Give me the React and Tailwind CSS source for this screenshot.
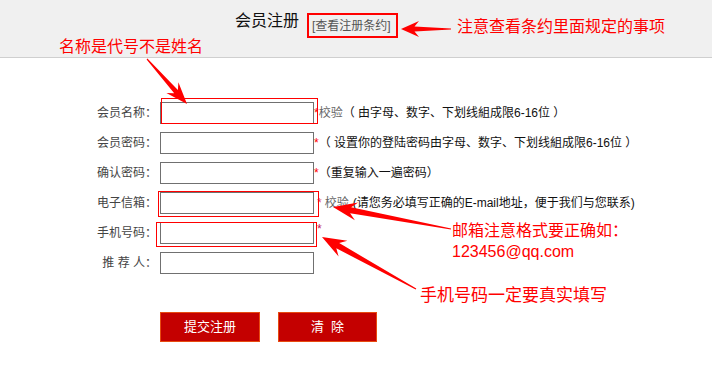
import React from "react";

const font = { fontFamily: '"Liberation Sans", "Noto Sans CJK SC", sans-serif' };

// polygon for a screenshot-style annotation arrow: thin tail, widening shaft, triangular head
const arrowPoints = (tx, ty, hx, hy, headLen, headW, shaftW) => {
  const dx = hx - tx;
  const dy = hy - ty;
  const len = Math.hypot(dx, dy);
  const ux = dx / len;
  const uy = dy / len;
  const px = -uy;
  const py = ux;
  const bx = hx - ux * headLen;
  const by = hy - uy * headLen;
  const nx = hx - ux * headLen * 0.75;
  const ny = hy - uy * headLen * 0.75;
  const pts = [
    [tx + px * 0.6, ty + py * 0.6],
    [nx + px * shaftW, ny + py * shaftW],
    [bx + px * headW, by + py * headW],
    [hx, hy],
    [bx - px * headW, by - py * headW],
    [nx - px * shaftW, ny - py * shaftW],
    [tx - px * 0.6, ty - py * 0.6],
  ];
  return pts.map((p) => p.map((v) => v.toFixed(1)).join(",")).join(" ");
};

const arrows = [
  { t: [147, 59], h: [187, 104], hl: 22, hw: 8, sw: 2.5 },
  { t: [451, 229], h: [333, 207], hl: 24, hw: 9, sw: 3 },
  { t: [416, 289], h: [322, 237], hl: 24, hw: 9, sw: 3 },
];

const rows = [
  {
    label: "会员名称：",
    hint: (
      <>
        <span className="text-[#f00]">*</span>
        <span className="text-[#666]">校验</span>
        <span>（ 由字母、数字、下划线組成限6-16位 ）</span>
      </>
    ),
  },
  {
    label: "会员密码：",
    hint: (
      <>
        <span className="text-[#f00]">*</span>
        <span>（ 设置你的登陆密码由字母、数字、下划线組成限6-16位 ）</span>
      </>
    ),
  },
  {
    label: "确认密码：",
    hint: (
      <>
        <span className="text-[#f00]">*</span>
        <span>（重复输入一遍密码）</span>
      </>
    ),
  },
  {
    label: "电子信箱：",
    hint: (
      <>
        <span className="text-[#e04060] ml-[3px]">*</span>
        <span className="text-[#666] ml-[3px]">校验</span>
        <span className="ml-[4px]">(请您务必填写正确的E-mail地址，便于我们与您联系)</span>
      </>
    ),
  },
  {
    label: "手机号码：",
    hint: <span className="text-[#c02060] ml-[3px] self-start leading-[14px]">*</span>,
  },
  { label: "推 荐 人：", hint: null },
];

export default function App() {
  return (
    <div className="relative w-[712px] h-[376px] bg-white overflow-hidden text-[#222]" style={font}>
      <div className="h-[58px] bg-[#f0f0f0] border-b border-[#cfcfcf] flex items-start pl-[235px] pt-[11px]">
        <span className="text-[16px] leading-[20px] text-[#111]">会员注册</span>
        <span className="ml-[8px] mt-[2px] h-[25px] w-[91px] border-2 border-[#f00] flex items-center pl-[3px] text-[12px] text-[#555]">
          [查看注册条约]
        </span>
        <svg className="ml-[2px] mt-[8px]" width="52" height="20" viewBox="0 0 52 20">
          <polygon points={arrowPoints(51, 10, 1, 10, 18, 8, 2.5)} fill="#f00" />
        </svg>
        <span className="ml-[5px] mt-[6px] text-[16px] leading-[20px] text-[#f00] whitespace-nowrap">
          注意查看条约里面规定的事项
        </span>
      </div>

      <div className="mt-[44px] flex flex-col gap-[8px]">
        {rows.map((r) => (
          <div key={r.label} className="flex items-center h-[22px] text-[12px]">
            <span className="w-[158px] text-right text-[#444] pr-[1px]">{r.label}</span>
            <div className="ml-[2px] w-[154px] h-[22px] border border-[#707070] bg-white" />
            <span className="flex items-center h-full text-[#111] whitespace-nowrap">{r.hint}</span>
          </div>
        ))}
      </div>

      <div className="mt-[38px] ml-[160px] flex gap-[18px]">
        <button className="w-[100px] h-[30px] bg-[#c40000] border border-[#e84a10] text-white text-[13px]">
          提交注册
        </button>
        <button className="w-[99px] h-[30px] bg-[#c40000] border border-[#e84a10] text-white text-[13px]">
          清&nbsp;&nbsp;除
        </button>
      </div>

      {/* annotation boxes drawn over the form */}
      <div className="absolute left-[161px] top-[98px] w-[157px] h-[26px] border border-[#f00]" />
      <div className="absolute left-[158px] top-[191px] w-[161px] h-[26px] border border-[#f00]" />
      <div className="absolute left-[156px] top-[222px] w-[161px] h-[25px] border border-[#f00]" />

      {/* annotation notes */}
      <div className="absolute left-[59px] top-[37px] text-[16px] leading-[20px] text-[#f00] whitespace-nowrap">
        名称是代号不是姓名
      </div>
      <div className="absolute left-[452px] top-[220px] flex flex-col text-[16px] leading-[21px] text-[#f00] whitespace-nowrap">
        <span>邮箱注意格式要正确如：</span>
        <span>123456@qq.com</span>
      </div>
      <div className="absolute left-[420px] top-[286px] text-[17px] leading-[20px] text-[#f00] whitespace-nowrap">
        手机号码一定要真实填写
      </div>

      <svg className="absolute inset-0 pointer-events-none" width="712" height="376">
        {arrows.map((a, i) => (
          <polygon key={i} points={arrowPoints(a.t[0], a.t[1], a.h[0], a.h[1], a.hl, a.hw, a.sw)} fill="#f00" />
        ))}
      </svg>
    </div>
  );
}
